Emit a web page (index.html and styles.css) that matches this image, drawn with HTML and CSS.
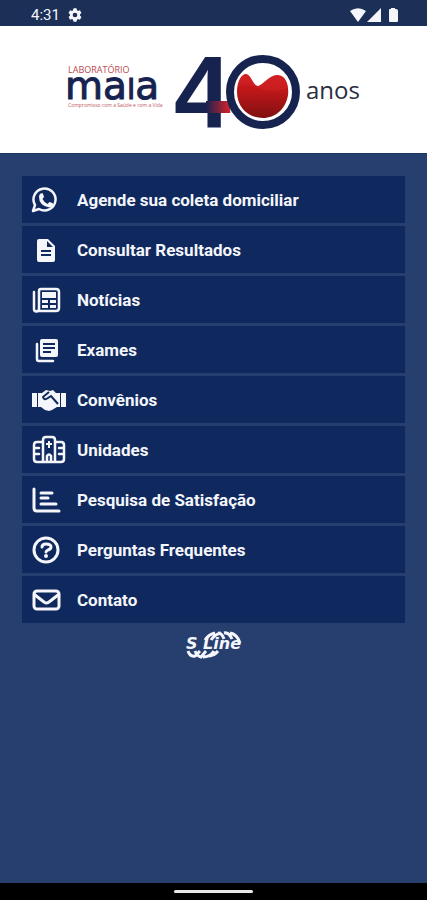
FILE: index.html
```html
<!DOCTYPE html>
<html lang="pt-BR">
<head>
<meta charset="utf-8">
<meta name="viewport" content="width=device-width, initial-scale=1">
<title>Laboratório Maia</title>
<link rel="stylesheet" href="styles.css">
</head>
<body>
<div class="status">
  <span class="status-group">
    <span>4:31</span>
    <svg width="14" height="14" viewBox="0 0 24 24" fill="currentColor" aria-hidden="true"><path fill-rule="evenodd" d="M8.500 4 9.500 0.500h5l1 3.500 1.500 1 3.500-1 2.500 4.500-2.500 2.500v2l2.500 2.500-2.500 4.500-3.500-1-1.500 1-1 3.500h-5l-1-3.500-1.500-1-3.500 1L1 15.500 3.500 13v-2L1 8.500 3.500 4 7 5zM12 8a4 4 0 1 0 0 8 4 4 0 0 0 0-8z"/></svg>
  </span>
  <svg class="status-icons" width="50" height="16" viewBox="0 0 50 16" fill="currentColor" aria-hidden="true"><path d="M1 4Q9-1.500 17 4L9 15zM18 15 32 1v14zM40 3q0-1 1-1h1V1h4v1h1q2 0 2 2v10q0 1-1 1h-7q-1 0-1-1z"/></svg>
</div>

<header class="brand">
  <svg class="logo" viewBox="0 0 296 76" role="img" aria-label="Laboratório Maia 40 anos">
    <defs>
      <linearGradient id="bar"><stop offset="0" stop-color="#17234f"/><stop offset="1" stop-color="#d8222a"/></linearGradient>
      <linearGradient id="flask" x2="0" y2="1"><stop offset="0" stop-color="#cf1b20"/><stop offset=".4" stop-color="#bd1619"/><stop offset="1" stop-color="#7f1011"/></linearGradient>
    </defs>
    <text class="logo-top" x="2" y="19">LABORATÓRIO</text>
    <text class="logo-name" x="-1" y="45">ma<tspan class="logo-cap">I</tspan>a</text>
    <text class="logo-motto" x="2" y="53">Compromisso com a Saúde e com a Vida</text>
    <text class="logo-four" x="108" y="73">4</text>
    <path fill="url(#bar)" d="M140 47h24v12h-24z"/>
    <circle cx="197" cy="38" r="33" fill="#fff" stroke="#17234f" stroke-width="8"/>
    <path fill="url(#flask)" d="M171 38c0-10 4-18 9-18 5 0 7 12 12 12 4 0 12-12 20-11 9 1 11 12 10 20-2 14-13 23-25 23-15 0-26-11-26-26z"/>
    <path fill="#de3030" opacity=".3" d="M172 32c10-2 16 0 24 3s18 2 26-1c-1-8-5-13-10-13-8-1-16 11-20 11-5 0-7-12-12-12-4 0-7 6-8 12z"/>
    <text class="logo-years" x="240" y="45">anos</text>
  </svg>
</header>

<main class="page">
  <nav class="menu" aria-label="Menu principal">
    <a class="item" href="#coleta">
      <svg class="icon" viewBox="0 0 34 28" aria-hidden="true"><path class="line thin" d="M1 25 3 19A11 11 0 1 1 7 23z"/><path class="solid" d="m8 8 2-1q1 0 2 4l-1.500 2q2 4 5 5l2-2q4 1 4 2.500-1 3-4 3Q7 20 7 11q0-2 1-3z"/></svg>
      <span>Agende sua coleta domiciliar</span>
    </a>
    <a class="item" href="#resultados">
      <svg class="icon" viewBox="0 0 34 28" aria-hidden="true"><path class="solid" fill-rule="evenodd" d="M7 3h9l7 7v14q0 2-2 2H7q-2 0-2-2V5q0-2 2-2zM15 5v6h6zM9 14v2h10v-2zM9 18v2h10v-2z"/></svg>
      <span>Consultar Resultados</span>
    </a>
    <a class="item" href="#noticias">
      <svg class="icon" viewBox="0 0 34 28" aria-hidden="true"><path class="line thin" d="M7 7v16a2 2 0 0 1-5 0V6M7 7V5q0-2 2-2h15q3 0 3 3v16q0 3-3 3H5"/><path class="solid" d="M10 6h14v6H10zM10 14h6v3h-6zM18 14h6v3h-6zM10 19h6v3h-6zM18 19h6v3h-6z"/></svg>
      <span>Notícias</span>
    </a>
    <a class="item" href="#exames">
      <svg class="icon" viewBox="0 0 34 28" aria-hidden="true"><path class="line thin" d="M5 8v15q0 2 2 2h14"/><path class="solid" fill-rule="evenodd" d="M10 3h14q2 0 2 2v14q0 2-2 2H10q-2 0-2-2V5q0-2 2-2zM11 7v2h12V7zM11 11v2h12v-2zM11 15v2h8v-2z"/></svg>
      <span>Exames</span>
    </a>
    <a class="item" href="#convenios">
      <svg class="icon" viewBox="0 0 34 28" aria-hidden="true"><path class="solid" d="M0 7h5v14H0zM29 7h5v14h-5zM6 7h4l4-3 4 1 3-1 3 3h4v14h-3l-5 3-3 1-4-1-4-3H6z"/><path class="cut" d="m17 6-6 5q1 4 5 1l3-2 7 8"/></svg>
      <span>Convênios</span>
    </a>
    <a class="item" href="#unidades">
      <svg class="icon" viewBox="0 0 34 28" aria-hidden="true"><path class="line thin" d="M11 6V4q0-3 3-3h6q3 0 3 3v2h6q3 0 3 3v14q0 3-3 3H5q-3 0-3-3V9q0-3 3-3zM11 6v20M23 6v20M3 12h4M3 18h4M27 12h4M27 18h4M15 25v-5q2-3 4 0v5"/><path class="solid" d="M16 5h2v2h2v2h-2v3h-2V9h-2V7h2z"/></svg>
      <span>Unidades</span>
    </a>
    <a class="item" href="#pesquisa">
      <svg class="icon" viewBox="0 0 34 28" aria-hidden="true"><path class="line" d="M2 3v19q0 3 3 3h22M9 7h11M9 12h7M9 18h15"/></svg>
      <span>Pesquisa de Satisfação</span>
    </a>
    <a class="item" href="#perguntas">
      <svg class="icon" viewBox="0 0 34 28" aria-hidden="true"><circle class="line" cx="14" cy="14" r="12"/><path class="line" d="M10 11q0-3 4-3 5 0 5 3 0 2-3 3-2 1-2 2"/><circle class="solid" cx="14" cy="20" r="2"/></svg>
      <span>Perguntas Frequentes</span>
    </a>
    <a class="item" href="#contato">
      <svg class="icon" viewBox="0 0 34 28" aria-hidden="true"><rect class="line" x="2" y="5" width="25" height="18" rx="3"/><path class="line" d="m3 9 9 7q2 2 5 0l9-7"/></svg>
      <span>Contato</span>
    </a>
  </nav>
  <svg class="vendor" width="56" height="28" viewBox="0 0 56 28" role="img" aria-label="S Line">
    <path class="arc" d="M19 9Q23 3 29 2M25 9Q29 3 35 2M32 2Q36 2 38 8M38 2Q43 1 46 8M44 2Q51 3 54 12M2 20Q4 26 9 25L14 20M9 20Q11 25 15 26L20 20M17 26Q24 26 28 20M23 25Q29 24 32 20"/>
    <text x="0" y="18">S Line</text>
  </svg>
</main>
<div class="navbar"><span class="handle"></span></div>
</body>
</html>
```
FILE: styles.css
```css
* { box-sizing: border-box; }
body {
  margin: 0;
  min-height: 100vh;
  display: flex;
  flex-direction: column;
  background: #263f6f;
  color: #f4f6fb;
  font-family: Roboto, "Liberation Sans", sans-serif;
}
.status {
  display: flex;
  align-items: center;
  justify-content: space-between;
  height: 26px;
  padding: 3px 28px 0 31px;
  background: #1b2f57;
  font-size: 15px;
}
.status-group { display: flex; align-items: center; gap: 8px; }
.brand {
  display: flex;
  justify-content: center;
  padding: 28px 24px 23px;
  background: #fff;
}
.logo { width: 100%; max-width: 296px; overflow: visible; }
.logo text { fill: #17234f; }
.logo .logo-top { font: 9px "Open Sans", sans-serif; fill: #b9484d; }
.logo .logo-name { font: 39px "DejaVu Sans", sans-serif; stroke: #17234f; stroke-width: 1; }
.logo .logo-cap { font-size: 28px; }
.logo .logo-motto { font: 5px "Open Sans", sans-serif; fill: #c0575b; }
.logo .logo-four { font: bold 102px "Liberation Sans", sans-serif; }
.logo .logo-years { font: 24px "Open Sans", sans-serif; fill: #2b2d42; }
.page {
  flex: 1;
  display: flex;
  flex-direction: column;
  align-items: center;
  gap: 8px;
  padding: 22px;
  border-top: 1px solid #1b3762;
}
.menu { display: flex; flex-direction: column; gap: 3px; width: 100%; }
.item {
  display: flex;
  align-items: center;
  gap: 11px;
  height: 47px;
  padding: 0 10px;
  background: #0f295e;
  color: inherit;
  font-size: 17px;
  font-weight: 700;
  text-decoration: none;
}
.icon { flex: none; width: 34px; height: 28px; overflow: visible; }
.solid { fill: currentColor; }
.line { fill: none; stroke: currentColor; stroke-width: 3; stroke-linejoin: round; stroke-linecap: round; }
.thin { stroke-width: 2.5; }
.cut { fill: none; stroke: #0f295e; stroke-width: 2; }
.vendor { color: #f4f6fb; }
.vendor text { font: italic bold 16px "DejaVu Sans", sans-serif; fill: currentColor; }
.arc { fill: none; stroke: currentColor; stroke-width: 3; }
.navbar {
  display: flex;
  align-items: center;
  justify-content: center;
  height: 17px;
  background: #000;
}
.handle { width: 79px; height: 3px; border-radius: 2px; background: #e8e8e8; }
```
